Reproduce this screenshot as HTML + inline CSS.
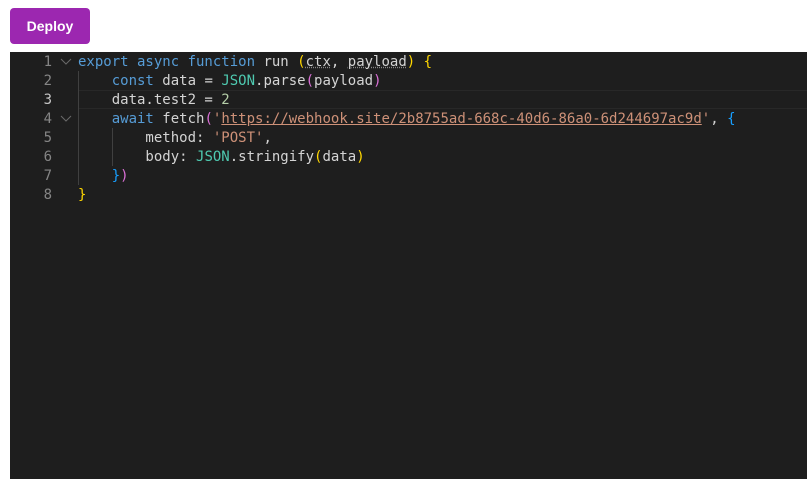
<!DOCTYPE html>
<html><head><style>
body{margin:0;background:#fff;width:807px;height:479px;overflow:hidden;position:relative;font-family:"Liberation Sans",sans-serif}
.btn{position:absolute;left:10px;top:8px;width:80px;height:36px;background:#9c27b0;border-radius:4px;color:#fff;font-size:14px;font-weight:bold;text-align:center;line-height:36px}
.ed{position:absolute;left:10px;top:52px;width:797px;height:427px;background:#1e1e1e}
.ln{position:absolute;left:0;width:42px;text-align:right;color:#858585;font:14px/19px "DejaVu Sans Mono",monospace;margin-top:1px}
.code{position:absolute;left:68px;top:1px;white-space:pre;font:14px/19px "DejaVu Sans Mono",monospace;color:#d4d4d4}
.cur{position:absolute;left:68px;right:0;top:38px;height:17px;border:1px solid #282828;border-right:none}
.k{color:#569cd6}.y{color:#ffd700}.p{color:#da70d6}.b{color:#179fff}.s{color:#ce9178}.t{color:#4ec9b0}.n{color:#b5cea8}
.g{position:absolute;width:1px;background:#404040}
</style></head><body>
<div class="btn">Deploy</div>
<div class="ed">
<div class="cur"></div>
<div class="g" style="left:68px;top:19px;height:114px"></div>
<div class="g" style="left:102px;top:76px;height:38px"></div>
<div class="ln" style="top:0">1</div><div class="ln" style="top:19px">2</div><div class="ln" style="top:38px;color:#c6c6c6">3</div><div class="ln" style="top:57px">4</div><div class="ln" style="top:76px">5</div><div class="ln" style="top:95px">6</div><div class="ln" style="top:114px">7</div><div class="ln" style="top:133px">8</div>
<svg style="position:absolute;left:50px;top:6px" width="12" height="8"><path d="M1 1 L6 6 L11 1" stroke="#6a6a6a" fill="none"/></svg>
<svg style="position:absolute;left:50px;top:63px" width="12" height="8"><path d="M1 1 L6 6 L11 1" stroke="#6a6a6a" fill="none"/></svg>
<div class="code"><span class="k">export async function</span> run <span class="y">(</span><span style="text-decoration:underline dotted #888">ctx</span>, <span style="text-decoration:underline dotted #888">payload</span><span class="y">)</span> <span class="y">{</span>
    <span class="k">const</span> data = <span class="t">JSON</span>.parse<span class="p">(</span>payload<span class="p">)</span>
    data.test2 = <span class="n">2</span>
    <span class="k">await</span> fetch<span class="p">(</span><span class="s">'<span style="text-decoration:underline">https://webhook.site/2b8755ad-668c-40d6-86a0-6d244697ac9d</span>'</span>, <span class="b">{</span>
        method: <span class="s">'POST'</span>,
        body: <span class="t">JSON</span>.stringify<span class="y">(</span>data<span class="y">)</span>
    <span class="b">}</span><span class="p">)</span>
<span class="y">}</span></div>
</div>
</body></html>
